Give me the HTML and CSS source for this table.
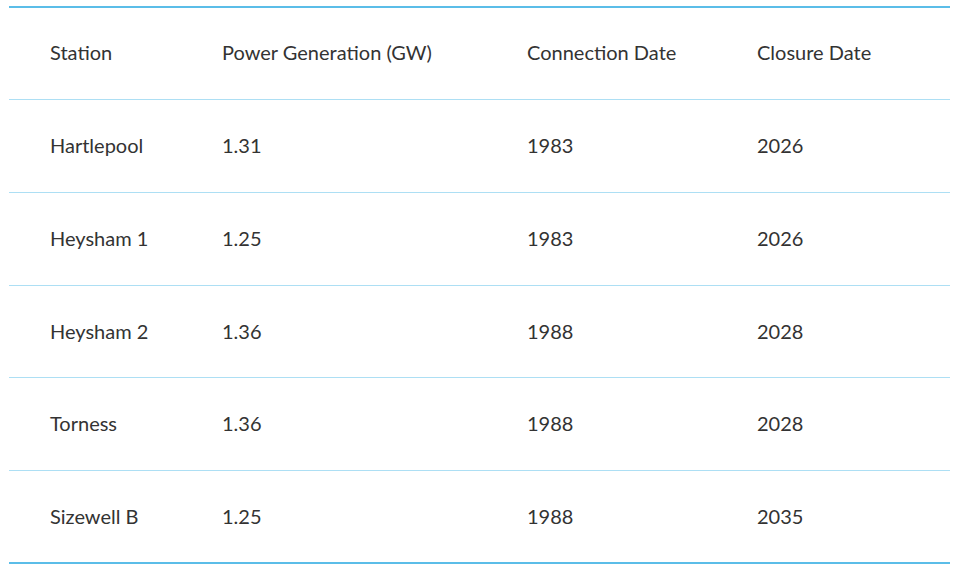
FILE: index.html
```html
<!DOCTYPE html>
<html lang="en">
<head>
<meta charset="utf-8">
<title>Nuclear stations</title>
<link rel="stylesheet" href="styles.css">
</head>
<body>
<table class="stations">
  <colgroup>
    <col class="c1"><col class="c2"><col class="c3"><col class="c4">
  </colgroup>
  <thead>
    <tr class="head"><th>Station</th><th>Power Generation (GW)</th><th>Connection Date</th><th>Closure Date</th></tr>
  </thead>
  <tbody>
    <tr class="tall"><td>Hartlepool</td><td>1.31</td><td>1983</td><td>2026</td></tr>
    <tr class="tall"><td>Heysham 1</td><td>1.25</td><td>1983</td><td>2026</td></tr>
    <tr class="short"><td>Heysham 2</td><td>1.36</td><td>1988</td><td>2028</td></tr>
    <tr class="tall"><td>Torness</td><td>1.36</td><td>1988</td><td>2028</td></tr>
    <tr class="last"><td>Sizewell B</td><td>1.25</td><td>1988</td><td>2035</td></tr>
  </tbody>
</table>
</body>
</html>
```
FILE: styles.css
```css
html, body { background: #ffffff; }
body {
  margin: 6px 8px 0 9px;
  font-family: Lato, "Noto Sans", sans-serif;
  color: #333333;
}
.stations {
  width: 941px;
  border-collapse: separate;
  border-spacing: 0;
  table-layout: fixed;
  border-top: 2px solid #5bbde8;
  border-bottom: 2px solid #5bbde8;
}
.c1 { width: 172px; }
.c2 { width: 305px; }
.c3 { width: 230px; }
.c4 { width: 234px; }
.stations th, .stations td {
  text-align: left;
  font-weight: 400;
  font-size: 20px;
  padding: 0 0 2px 41px;
  vertical-align: middle;
  border-bottom: 1px solid #addff4;
}
.stations th { padding-bottom: 3px; }
.stations tr.last td { border-bottom: none; }
.stations tr.head { height: 92px; }
.stations tr.tall { height: 93px; }
.stations tr.short { height: 92px; }
.stations tr.last { height: 91px; }
```
